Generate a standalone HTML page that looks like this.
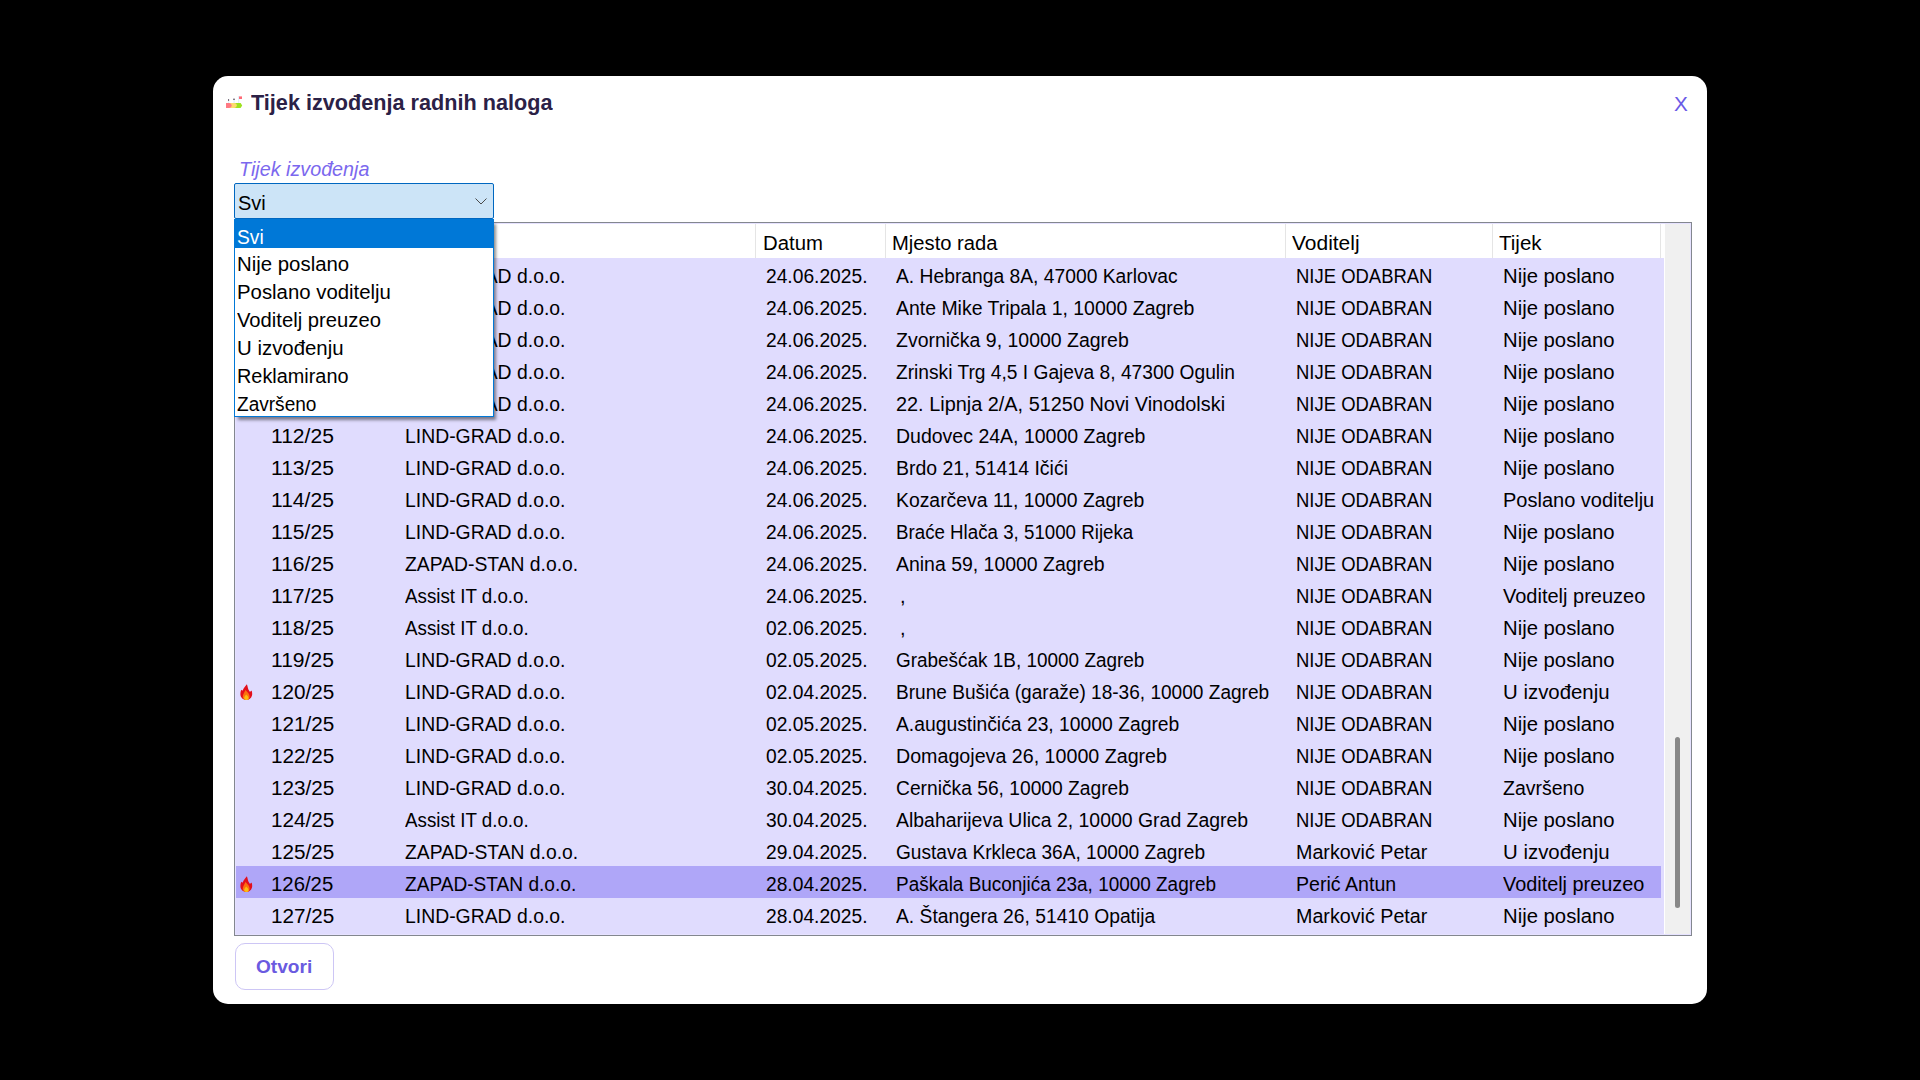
<!DOCTYPE html>
<html><head><meta charset="utf-8">
<style>
*{margin:0;padding:0;box-sizing:border-box}
html,body{width:1920px;height:1080px;background:#000;overflow:hidden}
body{font-family:"Liberation Sans",sans-serif;position:relative}
.dlg{position:absolute;left:213px;top:76px;width:1494px;height:928px;background:#fff;border-radius:15px}
.abs{position:absolute;white-space:nowrap}
span{display:inline-block;transform-origin:0 0;white-space:nowrap}
.title{left:251px;top:88.5px;font-size:22.8px;font-weight:bold;color:#2b2146;line-height:26px;transform:scaleX(0.9494)}
.xbtn{left:1674px;top:93px;font-size:19.5px;color:#6a5ae6;line-height:22px;transform:scaleX(1.0641)}
.lbl{left:239px;top:157px;font-size:19.5px;font-style:italic;color:#7b68ee;line-height:24px;transform:scaleX(1.0128)}
.combo{left:234px;top:183px;width:260px;height:36px;background:#cce4f7;border:1px solid #0067c0;border-radius:2px}
.combo span{position:absolute;left:3px;top:7px;font-size:20px;line-height:24px;color:#000}
.combo svg{position:absolute;left:240px;top:13.5px}
.tbl{left:234px;top:222px;width:1458px;height:714px;border:1px solid #83878f}
.in{position:absolute;left:0;top:0;width:1456px;height:712px;border:1px solid #e6e2ff;background:#e0dcfe;overflow:hidden}
.hdr{position:absolute;left:0;top:0;width:1429px;height:34px;background:#fff}
.hdr .d{position:absolute;top:0;width:1px;height:34px;background:#e5e5e5}
.hdr span{position:absolute;top:7px;font-size:20px;line-height:24px;color:#000}
.row{position:absolute;left:0;width:1428px;height:32px}
.row.sel{background:#afa6f8;width:1425px}
.c{position:absolute;top:5.5px;font-size:20px;line-height:24px;color:#000}
.fire{position:absolute;left:4px;top:10px}
.wc{position:absolute;left:1428px;top:0;width:1px;height:710px;background:#fff}
.sb{position:absolute;left:1429px;top:0;width:25px;height:710px;background:#f0f0f0}
.thumb{position:absolute;left:10px;top:513px;width:5px;height:171px;background:#888;border-radius:2.5px}
.dd{left:234px;top:219px;width:260px;height:198px;background:#fff;border:1px solid #0078d7;box-shadow:3px 4px 3px -1px rgba(0,0,0,0.45)}
.dd div{position:absolute;left:-1px;width:260px;height:28px;color:#000}
.dd div span{position:absolute;top:4px;left:4px;font-size:20px;line-height:24px}
.dd div.s{background:#0078d7;color:#fff;height:28px}
.dd div.s span{top:5px}
.btn{left:235px;top:943px;width:99px;height:47px;border:1px solid #cdc6f5;border-radius:10px;background:#fff}
.btn span{position:absolute;left:20px;top:12px;font-size:18px;font-weight:bold;color:#6a5ae0;line-height:22px;transform:scaleX(1.0601)}
.icon{left:226px;top:94px}
</style></head><body>
<div class="dlg"></div>
<svg class="abs icon" width="17" height="15" viewBox="0 0 17 15">
<rect x="2.2" y="7" width="1" height="2" fill="#dcf0fc"/>
<rect x="7.4" y="6" width="1.4" height="3" fill="#e4f2fd"/>
<rect x="12.2" y="2" width="1" height="7" fill="#dcecfc"/>
<ellipse cx="2.6" cy="6" rx="0.6" ry="1" fill="#5e5466"/>
<ellipse cx="8" cy="5.3" rx="1" ry="0.8" fill="#5e5466"/>
<rect x="13" y="2.4" width="3" height="2.6" fill="#ff6a76"/>
<path d="M0 9H14.6L16.2 11.5L14.6 14H0Z" fill="#9de21f"/>
<path d="M0 9H8.3A2.5 2.5 0 0 1 8.3 14H0Z" fill="#fddb6e"/>
<path d="M0 9H3.2A2.5 2.5 0 0 1 3.2 14H0Z" fill="#ff7a84"/>
</svg>
<span class="abs title">Tijek izvođenja radnih naloga</span>
<span class="abs xbtn">X</span>
<span class="abs lbl">Tijek izvođenja</span>
<div class="abs tbl"><div class="in">
<div class="hdr">
<div class="d" style="left:519px"></div><div class="d" style="left:649px"></div><div class="d" style="left:1049px"></div><div class="d" style="left:1256px"></div><div class="d" style="left:1424px"></div><span style="left:527px;transform:scaleX(1.0180)">Datum</span><span style="left:656px;transform:scaleX(1.0100)">Mjesto rada</span><span style="left:1056px;transform:scaleX(1.0480)">Voditelj</span><span style="left:1263px;transform:scaleX(1.0260)">Tijek</span>
</div>
<div class="row" style="top:34px"><span class="c" style="left:35px;transform:scaleX(1.0536)">107/25</span><span class="c" style="left:169px;transform:scaleX(0.9689)">LIND-GRAD d.o.o.</span><span class="c" style="left:530px;transform:scaleX(0.9608)">24.06.2025.</span><span class="c" style="left:660px;transform:scaleX(0.9632)">A. Hebranga 8A, 47000 Karlovac</span><span class="c" style="left:1060px;transform:scaleX(0.9231)">NIJE ODABRAN</span><span class="c" style="left:1267px;transform:scaleX(1.0142)">Nije poslano</span></div>
<div class="row" style="top:66px"><span class="c" style="left:35px;transform:scaleX(1.0536)">108/25</span><span class="c" style="left:169px;transform:scaleX(0.9689)">LIND-GRAD d.o.o.</span><span class="c" style="left:530px;transform:scaleX(0.9608)">24.06.2025.</span><span class="c" style="left:660px;transform:scaleX(0.9725)">Ante Mike Tripala 1, 10000 Zagreb</span><span class="c" style="left:1060px;transform:scaleX(0.9231)">NIJE ODABRAN</span><span class="c" style="left:1267px;transform:scaleX(1.0142)">Nije poslano</span></div>
<div class="row" style="top:98px"><span class="c" style="left:35px;transform:scaleX(1.0536)">109/25</span><span class="c" style="left:169px;transform:scaleX(0.9689)">LIND-GRAD d.o.o.</span><span class="c" style="left:530px;transform:scaleX(0.9608)">24.06.2025.</span><span class="c" style="left:660px;transform:scaleX(0.9737)">Zvornička 9, 10000 Zagreb</span><span class="c" style="left:1060px;transform:scaleX(0.9231)">NIJE ODABRAN</span><span class="c" style="left:1267px;transform:scaleX(1.0142)">Nije poslano</span></div>
<div class="row" style="top:130px"><span class="c" style="left:35px;transform:scaleX(1.0536)">110/25</span><span class="c" style="left:169px;transform:scaleX(0.9689)">LIND-GRAD d.o.o.</span><span class="c" style="left:530px;transform:scaleX(0.9608)">24.06.2025.</span><span class="c" style="left:660px;transform:scaleX(0.9589)">Zrinski Trg 4,5 I Gajeva 8, 47300 Ogulin</span><span class="c" style="left:1060px;transform:scaleX(0.9231)">NIJE ODABRAN</span><span class="c" style="left:1267px;transform:scaleX(1.0142)">Nije poslano</span></div>
<div class="row" style="top:162px"><span class="c" style="left:35px;transform:scaleX(1.0536)">111/25</span><span class="c" style="left:169px;transform:scaleX(0.9689)">LIND-GRAD d.o.o.</span><span class="c" style="left:530px;transform:scaleX(0.9608)">24.06.2025.</span><span class="c" style="left:660px;transform:scaleX(0.9942)">22. Lipnja 2/A, 51250 Novi Vinodolski</span><span class="c" style="left:1060px;transform:scaleX(0.9231)">NIJE ODABRAN</span><span class="c" style="left:1267px;transform:scaleX(1.0142)">Nije poslano</span></div>
<div class="row" style="top:194px"><span class="c" style="left:35px;transform:scaleX(1.0536)">112/25</span><span class="c" style="left:169px;transform:scaleX(0.9689)">LIND-GRAD d.o.o.</span><span class="c" style="left:530px;transform:scaleX(0.9608)">24.06.2025.</span><span class="c" style="left:660px;transform:scaleX(0.9750)">Dudovec 24A, 10000 Zagreb</span><span class="c" style="left:1060px;transform:scaleX(0.9231)">NIJE ODABRAN</span><span class="c" style="left:1267px;transform:scaleX(1.0142)">Nije poslano</span></div>
<div class="row" style="top:226px"><span class="c" style="left:35px;transform:scaleX(1.0536)">113/25</span><span class="c" style="left:169px;transform:scaleX(0.9689)">LIND-GRAD d.o.o.</span><span class="c" style="left:530px;transform:scaleX(0.9608)">24.06.2025.</span><span class="c" style="left:660px;transform:scaleX(0.9727)">Brdo 21, 51414 Ičići</span><span class="c" style="left:1060px;transform:scaleX(0.9231)">NIJE ODABRAN</span><span class="c" style="left:1267px;transform:scaleX(1.0142)">Nije poslano</span></div>
<div class="row" style="top:258px"><span class="c" style="left:35px;transform:scaleX(1.0536)">114/25</span><span class="c" style="left:169px;transform:scaleX(0.9689)">LIND-GRAD d.o.o.</span><span class="c" style="left:530px;transform:scaleX(0.9608)">24.06.2025.</span><span class="c" style="left:660px;transform:scaleX(0.9683)">Kozarčeva 11, 10000 Zagreb</span><span class="c" style="left:1060px;transform:scaleX(0.9231)">NIJE ODABRAN</span><span class="c" style="left:1267px">Poslano voditelju</span></div>
<div class="row" style="top:290px"><span class="c" style="left:35px;transform:scaleX(1.0536)">115/25</span><span class="c" style="left:169px;transform:scaleX(0.9689)">LIND-GRAD d.o.o.</span><span class="c" style="left:530px;transform:scaleX(0.9608)">24.06.2025.</span><span class="c" style="left:660px;transform:scaleX(0.9360)">Braće Hlača 3, 51000 Rijeka</span><span class="c" style="left:1060px;transform:scaleX(0.9231)">NIJE ODABRAN</span><span class="c" style="left:1267px;transform:scaleX(1.0142)">Nije poslano</span></div>
<div class="row" style="top:322px"><span class="c" style="left:35px;transform:scaleX(1.0536)">116/25</span><span class="c" style="left:169px;transform:scaleX(0.9657)">ZAPAD-STAN d.o.o.</span><span class="c" style="left:530px;transform:scaleX(0.9608)">24.06.2025.</span><span class="c" style="left:660px;transform:scaleX(0.9723)">Anina 59, 10000 Zagreb</span><span class="c" style="left:1060px;transform:scaleX(0.9231)">NIJE ODABRAN</span><span class="c" style="left:1267px;transform:scaleX(1.0142)">Nije poslano</span></div>
<div class="row" style="top:354px"><span class="c" style="left:35px;transform:scaleX(1.0536)">117/25</span><span class="c" style="left:169px;transform:scaleX(0.9380)">Assist IT d.o.o.</span><span class="c" style="left:530px;transform:scaleX(0.9608)">24.06.2025.</span><span class="c" style="left:664px">,</span><span class="c" style="left:1060px;transform:scaleX(0.9231)">NIJE ODABRAN</span><span class="c" style="left:1267px">Voditelj preuzeo</span></div>
<div class="row" style="top:386px"><span class="c" style="left:35px;transform:scaleX(1.0536)">118/25</span><span class="c" style="left:169px;transform:scaleX(0.9380)">Assist IT d.o.o.</span><span class="c" style="left:530px;transform:scaleX(0.9608)">02.06.2025.</span><span class="c" style="left:664px">,</span><span class="c" style="left:1060px;transform:scaleX(0.9231)">NIJE ODABRAN</span><span class="c" style="left:1267px;transform:scaleX(1.0142)">Nije poslano</span></div>
<div class="row" style="top:418px"><span class="c" style="left:35px;transform:scaleX(1.0536)">119/25</span><span class="c" style="left:169px;transform:scaleX(0.9689)">LIND-GRAD d.o.o.</span><span class="c" style="left:530px;transform:scaleX(0.9608)">02.05.2025.</span><span class="c" style="left:660px;transform:scaleX(0.9467)">Grabešćak 1B, 10000 Zagreb</span><span class="c" style="left:1060px;transform:scaleX(0.9231)">NIJE ODABRAN</span><span class="c" style="left:1267px;transform:scaleX(1.0142)">Nije poslano</span></div>
<div class="row" style="top:450px"><svg class="fire" width="13" height="17" viewBox="0 0 13 17"><path d="M6.9 0.3C7.6 2.5 8 4.2 8.4 5.6L9.8 7.8C10.6 7.4 11.2 6.8 11.6 6.4C12.2 8.2 12.4 10 12 11.5C11.2 14.4 9 16 6.3 16C3.2 16 0.6 13.8 0.4 10.6C0.3 8.6 0.8 7 1.2 5.8C1.7 6.4 2.2 6.6 2.7 6.4C3.6 4.4 5.2 2 6.9 0.3Z" fill="#e30f1b"/><path d="M5.3 6C6.8 7.6 9.6 9.6 9.6 12.6C9.6 14.6 8.2 16 6.3 16C4.2 16 2.6 14.4 2.8 12.2C3 10 4.6 8.4 5.3 6Z" fill="#fb6f10"/><path d="M6.2 10.4C7.4 11.6 8.6 12.8 8.6 14.2C8.6 15.3 7.6 16 6.4 16C5 16 4.2 15.2 4.2 14C4.2 12.6 5.4 11.6 6.2 10.4Z" fill="#f9bd12"/></svg><span class="c" style="left:35px;transform:scaleX(1.0351)">120/25</span><span class="c" style="left:169px;transform:scaleX(0.9689)">LIND-GRAD d.o.o.</span><span class="c" style="left:530px;transform:scaleX(0.9608)">02.04.2025.</span><span class="c" style="left:660px;transform:scaleX(0.9535)">Brune Bušića (garaže) 18-36, 10000 Zagreb</span><span class="c" style="left:1060px;transform:scaleX(0.9231)">NIJE ODABRAN</span><span class="c" style="left:1267px;transform:scaleX(1.0200)">U izvođenju</span></div>
<div class="row" style="top:482px"><span class="c" style="left:35px;transform:scaleX(1.0351)">121/25</span><span class="c" style="left:169px;transform:scaleX(0.9689)">LIND-GRAD d.o.o.</span><span class="c" style="left:530px;transform:scaleX(0.9608)">02.05.2025.</span><span class="c" style="left:660px;transform:scaleX(0.9651)">A.augustinčića 23, 10000 Zagreb</span><span class="c" style="left:1060px;transform:scaleX(0.9231)">NIJE ODABRAN</span><span class="c" style="left:1267px;transform:scaleX(1.0142)">Nije poslano</span></div>
<div class="row" style="top:514px"><span class="c" style="left:35px;transform:scaleX(1.0351)">122/25</span><span class="c" style="left:169px;transform:scaleX(0.9689)">LIND-GRAD d.o.o.</span><span class="c" style="left:530px;transform:scaleX(0.9608)">02.05.2025.</span><span class="c" style="left:660px;transform:scaleX(0.9827)">Domagojeva 26, 10000 Zagreb</span><span class="c" style="left:1060px;transform:scaleX(0.9231)">NIJE ODABRAN</span><span class="c" style="left:1267px;transform:scaleX(1.0142)">Nije poslano</span></div>
<div class="row" style="top:546px"><span class="c" style="left:35px;transform:scaleX(1.0351)">123/25</span><span class="c" style="left:169px;transform:scaleX(0.9689)">LIND-GRAD d.o.o.</span><span class="c" style="left:530px;transform:scaleX(0.9608)">30.04.2025.</span><span class="c" style="left:660px;transform:scaleX(0.9611)">Cernička 56, 10000 Zagreb</span><span class="c" style="left:1060px;transform:scaleX(0.9231)">NIJE ODABRAN</span><span class="c" style="left:1267px;transform:scaleX(0.9750)">Završeno</span></div>
<div class="row" style="top:578px"><span class="c" style="left:35px;transform:scaleX(1.0351)">124/25</span><span class="c" style="left:169px;transform:scaleX(0.9380)">Assist IT d.o.o.</span><span class="c" style="left:530px;transform:scaleX(0.9608)">30.04.2025.</span><span class="c" style="left:660px;transform:scaleX(0.9717)">Albaharijeva Ulica 2, 10000 Grad Zagreb</span><span class="c" style="left:1060px;transform:scaleX(0.9231)">NIJE ODABRAN</span><span class="c" style="left:1267px;transform:scaleX(1.0142)">Nije poslano</span></div>
<div class="row" style="top:610px"><span class="c" style="left:35px;transform:scaleX(1.0351)">125/25</span><span class="c" style="left:169px;transform:scaleX(0.9657)">ZAPAD-STAN d.o.o.</span><span class="c" style="left:530px;transform:scaleX(0.9608)">29.04.2025.</span><span class="c" style="left:660px;transform:scaleX(0.9551)">Gustava Krkleca 36A, 10000 Zagreb</span><span class="c" style="left:1060px;transform:scaleX(0.9846)">Marković Petar</span><span class="c" style="left:1267px;transform:scaleX(1.0200)">U izvođenju</span></div>
<div class="row sel" style="top:642px"><svg class="fire" width="13" height="17" viewBox="0 0 13 17"><path d="M6.9 0.3C7.6 2.5 8 4.2 8.4 5.6L9.8 7.8C10.6 7.4 11.2 6.8 11.6 6.4C12.2 8.2 12.4 10 12 11.5C11.2 14.4 9 16 6.3 16C3.2 16 0.6 13.8 0.4 10.6C0.3 8.6 0.8 7 1.2 5.8C1.7 6.4 2.2 6.6 2.7 6.4C3.6 4.4 5.2 2 6.9 0.3Z" fill="#e30f1b"/><path d="M5.3 6C6.8 7.6 9.6 9.6 9.6 12.6C9.6 14.6 8.2 16 6.3 16C4.2 16 2.6 14.4 2.8 12.2C3 10 4.6 8.4 5.3 6Z" fill="#fb6f10"/><path d="M6.2 10.4C7.4 11.6 8.6 12.8 8.6 14.2C8.6 15.3 7.6 16 6.4 16C5 16 4.2 15.2 4.2 14C4.2 12.6 5.4 11.6 6.2 10.4Z" fill="#f9bd12"/></svg><span class="c" style="left:35px;transform:scaleX(1.0172)">126/25</span><span class="c" style="left:169px;transform:scaleX(0.9548)">ZAPAD-STAN d.o.o.</span><span class="c" style="left:530px;transform:scaleX(0.9608)">28.04.2025.</span><span class="c" style="left:660px;transform:scaleX(0.9469)">Paškala Buconjića 23a, 10000 Zagreb</span><span class="c" style="left:1060px;transform:scaleX(0.9798)">Perić Antun</span><span class="c" style="left:1267px;transform:scaleX(0.9929)">Voditelj preuzeo</span></div>
<div class="row" style="top:674px"><span class="c" style="left:35px;transform:scaleX(1.0351)">127/25</span><span class="c" style="left:169px;transform:scaleX(0.9689)">LIND-GRAD d.o.o.</span><span class="c" style="left:530px;transform:scaleX(0.9608)">28.04.2025.</span><span class="c" style="left:660px;transform:scaleX(0.9634)">A. Štangera 26, 51410 Opatija</span><span class="c" style="left:1060px;transform:scaleX(0.9846)">Marković Petar</span><span class="c" style="left:1267px;transform:scaleX(1.0142)">Nije poslano</span></div>

<div class="wc"></div><div class="sb"><div class="thumb"></div></div>
</div></div>
<div class="abs combo"><span>Svi</span><svg width="12" height="8" viewBox="0 0 12 8"><path d="M0.5 0.5L6 6L11.5 0.5" fill="none" stroke="#4a4a4a" stroke-width="1"/></svg></div>
<div class="abs dd">
<div class="s" style="top:0px"><span style="left:3px;transform:scaleX(0.9600)">Svi</span></div>
<div style="top:28px"><span style="left:3px;transform:scaleX(1.0190)">Nije poslano</span></div>
<div style="top:56px"><span style="left:3px;transform:scaleX(1.0180)">Poslano voditelju</span></div>
<div style="top:84px"><span style="left:3px;transform:scaleX(1.0110)">Voditelj preuzeo</span></div>
<div style="top:112px"><span style="left:3px;transform:scaleX(1.0200)">U izvođenju</span></div>
<div style="top:140px"><span style="left:3px;transform:scaleX(0.9929)">Reklamirano</span></div>
<div style="top:168px"><span style="left:3px;transform:scaleX(0.9529)">Završeno</span></div>
</div>
<div class="abs btn"><span>Otvori</span></div>
</body></html>
